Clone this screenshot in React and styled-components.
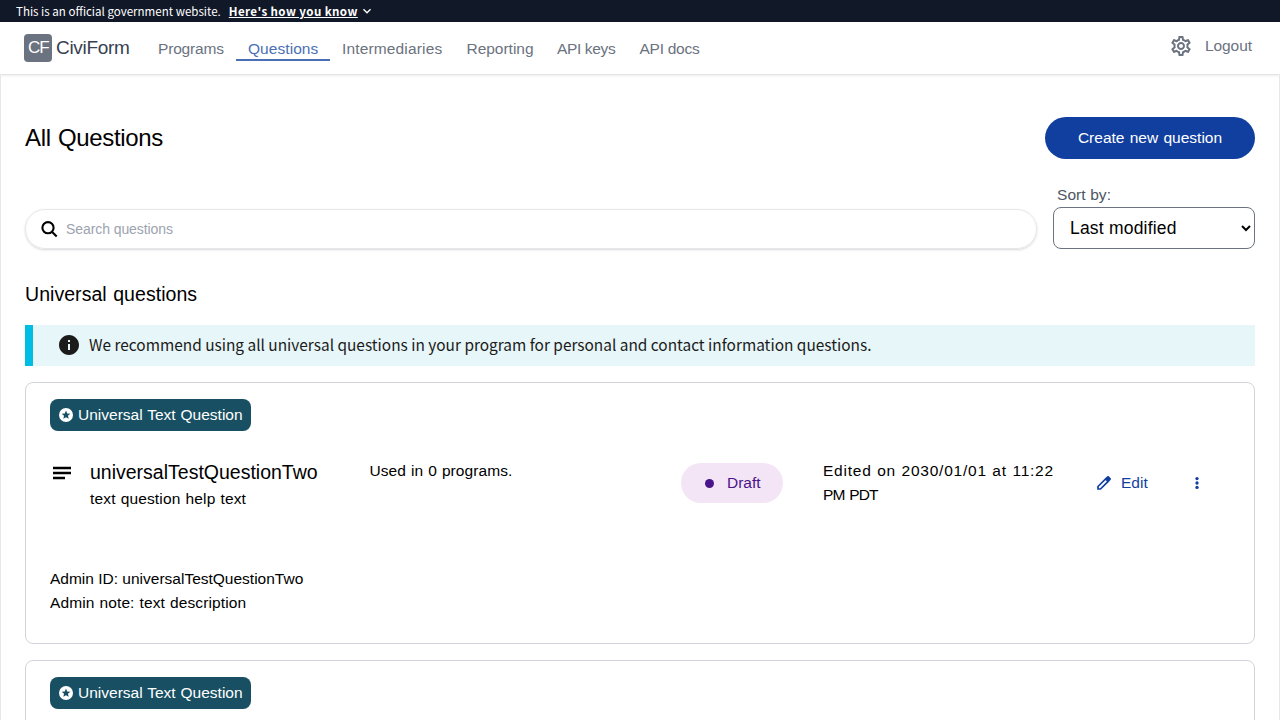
import React from "react";
import styled, { createGlobalStyle } from "styled-components";
import { MdOutlineSettings, MdInfo, MdExpandMore } from "react-icons/md";

const Global = createGlobalStyle`
  *, *::before, *::after { box-sizing: border-box; }
  html, body { margin: 0; height: 720px; overflow: hidden; background: #fff; }
  body {
    font-family: "Liberation Sans", Arial, sans-serif;
    font-size: 15.5px;
    line-height: 24px;
    color: #000;
  }
  h1, h2, h3, p { margin: 0; font-weight: 400; }
`;

const Page = styled.div`
  display: flex;
  flex-direction: column;
  height: 720px;
  overflow: hidden;
`;

const Banner = styled.div`
  display: flex;
  align-items: center;
  flex: none;
  height: 22px;
  padding: 0 16px;
  gap: 8px;
  background: #111827;
  color: #fff;
  font: 11.56px/22px "Noto Sans CJK SC", sans-serif;
  svg { margin-left: -7px; }
`;

const BannerText = styled.span`
  white-space: nowrap;
`;

const BannerLink = styled(BannerText)`
  font-weight: 700;
  letter-spacing: 0.41px;
  text-decoration: underline;
`;

const Header = styled.header`
  display: flex;
  flex: none;
  height: 52px;
  padding: 0 28px 0 24px;
  background: #fff;
  color: #6b7280;
  box-shadow: 0 1px 3px rgba(0, 0, 0, 0.1), 0 1px 2px rgba(0, 0, 0, 0.06);
`;

const Brand = styled.div`
  display: flex;
  gap: 4px;
  margin-top: 12px;
  height: 28px;
`;

const BrandMark = styled.div`
  width: 28px;
  height: 28px;
  padding-left: 4px;
  border-radius: 4px;
  background: #6b7280;
  color: #fff;
  font-size: 17px;
  line-height: 28px;
  letter-spacing: -1px;
`;

const BrandName = styled.span`
  width: 78px;
  color: #374151;
  font-size: 19px;
  line-height: 28px;
  letter-spacing: -0.3px;
`;

const Nav = styled.nav`
  display: flex;
  margin-left: 12px;
  padding-top: 15px;
  height: 39px;
`;

const NavItem = styled.a`
  width: ${(p) => p.$w}px;
  height: 24px;
  padding-left: 12px;
  white-space: nowrap;
  letter-spacing: ${(p) => p.$track}px;
  color: ${(p) => (p.$active ? "#4a6fb5" : "#6b7280")};
  border-bottom: 2px solid ${(p) => (p.$active ? "#4a6fb5" : "transparent")};
`;

const Account = styled.div`
  display: flex;
  align-items: center;
  gap: 12px;
  height: 24px;
  margin: 12px 0 0 auto;
  letter-spacing: -0.05px;
`;

const Main = styled.main`
  display: flex;
  flex-direction: column;
  flex: 1;
  min-height: 0;
  padding: 43px 24px 0;
  border: 1px solid #e5e7eb;
  border-width: 0 1px;
`;

const TitleRow = styled.div`
  display: flex;
  justify-content: space-between;
  align-items: center;
  flex: none;
`;

const Title = styled.h1`
  font-size: 24px;
  line-height: 32px;
  letter-spacing: -0.35px;
  word-spacing: 1px;
`;

const CreateButton = styled.button`
  width: 210px;
  height: 42px;
  padding: 0;
  border: 0;
  border-radius: 21px;
  background: #113f9f;
  color: #fff;
  font: inherit;
  word-spacing: 1px;
`;

const FilterRow = styled.div`
  display: flex;
  flex: none;
  align-items: flex-end;
  gap: 16px;
  margin-top: 24px;
`;

const SearchBox = styled.label`
  display: flex;
  flex: 1;
  align-items: center;
  gap: 8px;
  height: 40px;
  padding: 0 16px 0 14px;
  border: 1px solid #e5e7eb;
  border-radius: 20px;
  box-shadow: 0 1px 3px rgba(0, 0, 0, 0.1), 0 1px 2px rgba(0, 0, 0, 0.06);
`;

const SearchInput = styled.input`
  flex: 1;
  padding: 0 0 1px;
  border: 0;
  outline: 0;
  background: none;
  font: 14px "Liberation Sans", Arial, sans-serif;
  letter-spacing: -0.08px;
  &::placeholder { color: #9ca3af; }
`;

const SortField = styled.label`
  display: flex;
  flex-direction: column;
  width: 202px;
`;

const SortLabel = styled.span`
  padding-left: 4px;
  color: #4b5563;
  letter-spacing: 0.08px;
`;

const Select = styled.select`
  height: 42px;
  padding: 0 0 0 12px;
  border: 1px solid #6b7280;
  border-radius: 8px;
  background: #fff;
  color: #000;
  font: 17.5px "Liberation Sans", Arial, sans-serif;
  letter-spacing: 0.2px;
`;

const SectionTitle = styled.h2`
  flex: none;
  margin: 31px 0 1px;
  font-size: 19.5px;
  line-height: 28px;
  letter-spacing: 0.05px;
  word-spacing: 1px;
`;

const Alert = styled.div`
  display: flex;
  flex: none;
  gap: 8px;
  height: 41px;
  margin: 16px 0;
  padding: 8px 0 0 24px;
  border-left: 8px solid #00bde3;
  background: #e7f6f8;
  color: #1b1b1b;
  font: 15.42px/24px "Noto Sans CJK SC", sans-serif;
`;

const AlertText = styled.p`
  margin-top: -1px;
  white-space: nowrap;
`;

const Card = styled.article`
  flex: none;
  height: 262px;
  margin-bottom: 16px;
  padding: 16px 24px;
  border: 1px solid #d1d5db;
  border-radius: 8px;
`;

const Tag = styled.div`
  display: flex;
  align-items: center;
  gap: 4px;
  width: 201px;
  height: 32px;
  padding-left: 8px;
  border-radius: 8px;
  background: #184f63;
  color: #fff;
  white-space: nowrap;
  word-spacing: 0.6px;
`;

const Summary = styled.div`
  display: grid;
  grid-template-columns: 40px 279.5px 311.5px 142px 272px 93px 22px;
  height: 108px;
  margin-top: 28px;
  svg { display: block; }
`;

const TypeIcon = styled.div`
  padding-top: 2px;
`;

const QuestionName = styled.h3`
  margin: -1px 0 1px;
  font-size: 19.5px;
  line-height: 28px;
`;

const Line = styled.p`
  white-space: nowrap;
  letter-spacing: ${(p) => p.$track || 0}px;
  word-spacing: ${(p) => p.$space || 0}px;
`;

const Status = styled.div`
  display: flex;
  align-items: center;
  width: 102px;
  height: 40px;
  margin-top: 4px;
  padding-left: 24px;
  gap: 14px;
  border-radius: 20px;
  background: #f3e5f5;
  color: #4a148c;
  &::before {
    content: "";
    width: 9px;
    height: 9px;
    margin-right: -1px;
    border-radius: 50%;
    background: #4a148c;
  }
`;

const Action = styled.button`
  display: flex;
  align-items: center;
  gap: 8px;
  height: 40px;
  margin-top: 4px;
  padding: 0;
  border: 0;
  background: none;
  color: #113f9f;
  font: inherit;
`;

const navItems = [
  ["Programs", 90, -0.18],
  ["Questions", 94, 0.06],
  ["Intermediaries", 124.5, 0.15],
  ["Reporting", 90.5, -0.02],
  ["API keys", 82.5, -0.36],
  ["API docs", 84, -0.26],
];

function SearchIcon() {
  return (
    <svg width="18" height="18" viewBox="0 0 18 18" fill="none" stroke="#000" strokeWidth="2.1">
      <circle cx="8" cy="7.7" r="5.6" />
      <path d="M11.9 11.7l4.8 4.8" />
    </svg>
  );
}

function TextLinesIcon() {
  return (
    <svg width="24" height="24" viewBox="0 0 24 24" stroke="#000" strokeWidth="2.3">
      <path d="M3 7h18M3 12h18M3 17h12" />
    </svg>
  );
}

function StarBadge() {
  return (
    <svg width="16" height="16" viewBox="0 0 16 16">
      <circle cx="8" cy="8" r="7" fill="#fff" />
      <path
        fill="#184f63"
        d="M8 3.6l1.2 2.9 3.1.25-2.35 2 .75 3.05L8 10.15 5.3 11.8l.75-3.05-2.35-2 3.1-.25z"
      />
    </svg>
  );
}

function PencilIcon() {
  return (
    <svg width="18" height="18" viewBox="0 0 18 18">
      <path d="M3 15v-2.5l7.6-7.6 2.5 2.5L5.5 15z" fill="none" stroke="currentColor" strokeWidth="1.7" />
      <path d="M10 4.4l1.9-1.9c.7-.7 1.5-.7 2.1-.1l1.5 1.5c.7.7.6 1.5 0 2.1L13.6 8z" fill="currentColor" />
    </svg>
  );
}

function MoreIcon() {
  return (
    <svg width="18" height="18" viewBox="0 0 18 18" fill="currentColor">
      <circle cx="9" cy="4.6" r="1.65" />
      <circle cx="9" cy="9" r="1.65" />
      <circle cx="9" cy="13.4" r="1.65" />
    </svg>
  );
}

function QuestionDetails({ name, help, note }) {
  return (
    <>
      <Summary>
        <TypeIcon><TextLinesIcon /></TypeIcon>
        <div>
          <QuestionName>{name}</QuestionName>
          <Line $track={0.15} $space={0.6}>{help}</Line>
        </div>
        <Line $track={0.08} $space={0.6}>Used in 0 programs.</Line>
        <Status>Draft</Status>
        <div>
          <Line $track={0.77} $space={0.5}>Edited on 2030/01/01 at 11:22</Line>
          <Line $track={-0.8} $space={1}>PM PDT</Line>
        </div>
        <Action><PencilIcon />Edit</Action>
        <Action><MoreIcon /></Action>
      </Summary>
      <Line>Admin ID: {name}</Line>
      <Line $track={0.11} $space={0.6}>Admin note: {note}</Line>
    </>
  );
}

function QuestionCard({ children }) {
  return (
    <Card>
      <Tag>
        <StarBadge />
        Universal Text Question
      </Tag>
      {children}
    </Card>
  );
}

export default function App() {
  return (
    <Page>
      <Global />
      <Banner>
        <BannerText>This is an official government website.</BannerText>
        <BannerLink>Here's how you know</BannerLink>
        <MdExpandMore size={16} />
      </Banner>
      <Header>
        <Brand>
          <BrandMark>CF</BrandMark>
          <BrandName>CiviForm</BrandName>
        </Brand>
        <Nav>
          {navItems.map(([label, width, track]) => (
            <NavItem key={label} $w={width} $track={track} $active={label === "Questions"}>
              {label}
            </NavItem>
          ))}
        </Nav>
        <Account>
          <MdOutlineSettings size={24} />
          Logout
        </Account>
      </Header>
      <Main>
        <TitleRow>
          <Title>All Questions</Title>
          <CreateButton>Create new question</CreateButton>
        </TitleRow>
        <FilterRow>
          <SearchBox>
            <SearchIcon />
            <SearchInput placeholder="Search questions" />
          </SearchBox>
          <SortField>
            <SortLabel>Sort by:</SortLabel>
            <Select defaultValue="modified">
              <option value="modified">Last modified</option>
            </Select>
          </SortField>
        </FilterRow>
        <SectionTitle>Universal questions</SectionTitle>
        <Alert>
          <MdInfo size={24} />
          <AlertText>
            We recommend using all universal questions in your program for personal and contact information questions.
          </AlertText>
        </Alert>
        <QuestionCard>
          <QuestionDetails
            name="universalTestQuestionTwo"
            help="text question help text"
            note="text description"
          />
        </QuestionCard>
        <QuestionCard />
      </Main>
    </Page>
  );
}
